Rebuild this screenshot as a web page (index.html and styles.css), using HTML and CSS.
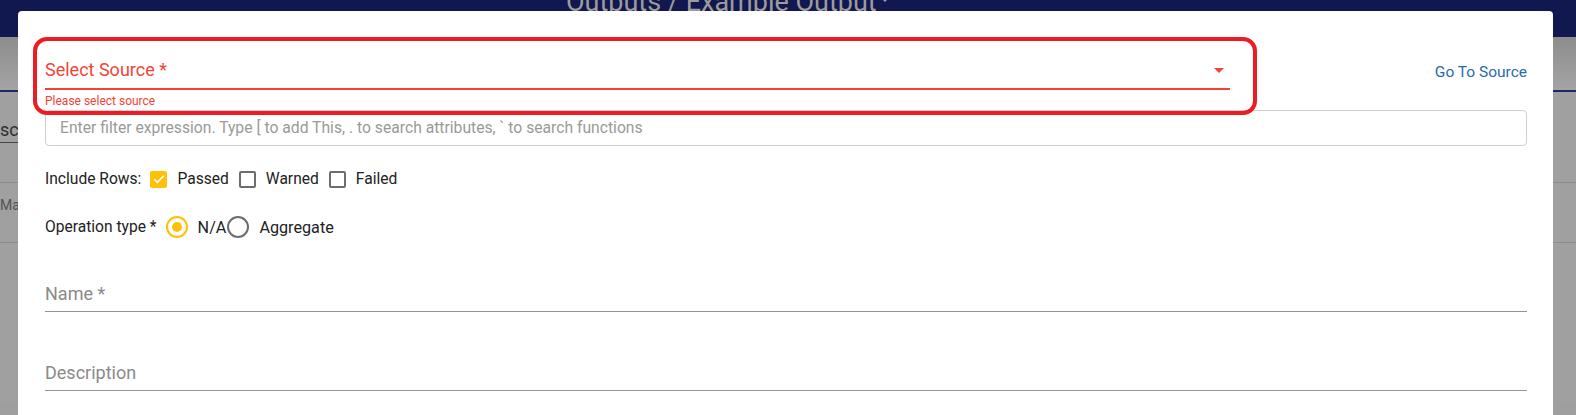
FILE: index.html
```html
<!DOCTYPE html>
<html>
<head>
<meta charset="utf-8">
<link rel="stylesheet" href="styles.css">
</head>
<body>
<div class="page">
  <header class="topbar">
    <div class="title">Outputs / Example Output<span class="caret"></span></div>
  </header>
  <div class="subbar"></div>
  <div class="content">
    <div class="row-a"><span class="cut">sc</span></div>
    <div class="row-b"><span class="map">Map</span></div>
    <div class="row-c"></div>
  </div>
</div>

<div class="dialog">
  <div class="highlight"></div>
  <div class="source-row">
    <div class="select-wrap">
      <div class="select-field">
        <span class="select-label">Select Source *</span>
        <span class="arrow"></span>
      </div>
      <div class="helper">Please select source</div>
    </div>
    <a class="goto">Go To Source</a>
  </div>
  <div class="filter">Enter filter expression. Type [ to add This, . to search attributes, ` to search functions</div>

  <div class="opt-row rows">
    <span class="opt-label">Include Rows:</span>
    <span class="cb checked"><svg viewBox="0 0 18 18" width="18" height="18"><path d="M4.2 9.3 L7.4 12.4 L13.8 5.8" fill="none" stroke="#fff" stroke-width="1.6"/></svg></span>
    <span class="opt-text">Passed</span>
    <span class="cb"></span>
    <span class="opt-text">Warned</span>
    <span class="cb"></span>
    <span class="opt-text">Failed</span>
  </div>

  <div class="opt-row op">
    <span class="opt-label">Operation type *</span>
    <span class="radio checked"></span>
    <span class="opt-text na">N/A</span>
    <span class="radio"></span>
    <span class="opt-text">Aggregate</span>
  </div>

  <div class="text-field name"><span>Name *</span></div>
  <div class="text-field desc"><span>Description</span></div>
</div>
</body>
</html>
```
FILE: styles.css
```css
* { box-sizing: border-box; }
html, body { margin: 0; padding: 0; }
body {
  width: 1576px;
  height: 415px;
  overflow: hidden;
  font-family: Roboto, "Liberation Sans", Arial, sans-serif;
  background: #9f9f9f;
  position: relative;
}
.page { width: 100%; }
.topbar {
  height: 37px;
  background: #11174f;
  overflow: hidden;
}
.title {
  padding-left: 566px;
  margin-top: -13px;
  font-size: 27px;
  line-height: 30px;
  color: #9c9c9c;
  white-space: nowrap;
}
.caret {
  display: inline-block;
  width: 0; height: 0;
  border-left: 5px solid transparent;
  border-right: 5px solid transparent;
  border-top: 5px solid #9c9c9c;
  margin-left: 3px;
  vertical-align: 9px;
}
.subbar {
  height: 55px;
  background: linear-gradient(180deg, #8d8d8d 0%, #a4a4a4 100%);
  border-bottom: 2px solid #1c2766;
}
.content { background: #a0a0a0; }
.row-a {
  height: 91px;
  border-bottom: 1px solid #8a8a8a;
  padding-top: 27px;
}
.cut {
  display: inline-block;
  font-size: 18px;
  color: #303030;
  border-bottom: 1px solid #444;
  padding-bottom: 2px;
  width: 20px;
  overflow: hidden;
  white-space: nowrap;
}
.row-b {
  height: 60px;
  border-bottom: 1px solid #8c8c8c;
  padding-top: 12px;
}
.map {
  font-size: 14px;
  color: #555;
}
.row-c { height: 160px; }

.dialog {
  position: absolute;
  left: 18px;
  top: 11px;
  width: 1535px;
  height: 404px;
  background: #fff;
  border-radius: 4px 4px 0 0;
  padding: 0 26px 0 27px;
}
.highlight {
  position: absolute;
  left: 15px;
  top: 26px;
  width: 1224px;
  height: 78px;
  border: 4px solid #ed1c24;
  border-radius: 14px;
}
.source-row {
  display: flex;
  justify-content: space-between;
  align-items: flex-start;
}
.select-wrap { width: 1185px; }
.select-field {
  position: relative;
  padding-top: 47px;
  padding-bottom: 5px;
  border-bottom: 2px solid #f44336;
  line-height: 24px;
}
.select-label {
  font-size: 18px;
  color: #f44336;
}
.arrow {
  position: absolute;
  right: 6px;
  top: 57px;
  width: 0; height: 0;
  border-left: 5px solid transparent;
  border-right: 5px solid transparent;
  border-top: 5px solid #f44336;
}
.helper {
  font-size: 12px;
  line-height: 14px;
  margin-top: 4px;
  color: #f44336;
}
.goto {
  margin-top: 51px;
  font-size: 15.5px;
  line-height: 20px;
  color: #2a6aad;
}
.filter {
  margin-top: 2px;
  height: 36px;
  border: 1px solid #cfcfcf;
  border-radius: 4px;
  padding: 0 14px;
  font-size: 15.7px;
  line-height: 34px;
  color: #9a9a9a;
  white-space: nowrap;
}
.opt-row {
  display: flex;
  align-items: center;
  height: 24px;
  font-size: 15.6px;
  color: #222;
}
.rows { margin-top: 21px; }
.op { margin-top: 24px; }
.opt-label { margin-right: 9px; }
.cb {
  width: 17px; height: 17px;
  border: 2px solid #6d6d6d;
  border-radius: 2px;
  margin-right: 10px;
  display: flex;
  align-items: center;
  justify-content: center;
}
.cb.checked {
  background: #ffc107;
  border-color: #ffc107;
}
.cb.checked svg { display: block; flex: none; }
.opt-text { margin-right: 10px; }
.opt-text.na { margin-right: 1px; }
.radio {
  width: 22px; height: 22px;
  border: 2px solid #6d6d6d;
  border-radius: 50%;
  margin-right: 10px;
  position: relative;
}
.radio.checked { border-color: #ffc107; }
.radio.checked::after {
  content: "";
  position: absolute;
  left: 4px; top: 4px;
  width: 10px; height: 10px;
  border-radius: 50%;
  background: #ffc107;
}
.op .opt-text { font-size: 16.2px; }
.text-field {
  font-size: 18px;
  line-height: 24px;
  color: #8a8a8a;
  padding-bottom: 5px;
  border-bottom: 1px solid #949494;
}
.name { margin-top: 43px; }
.desc { margin-top: 49px; }
```
